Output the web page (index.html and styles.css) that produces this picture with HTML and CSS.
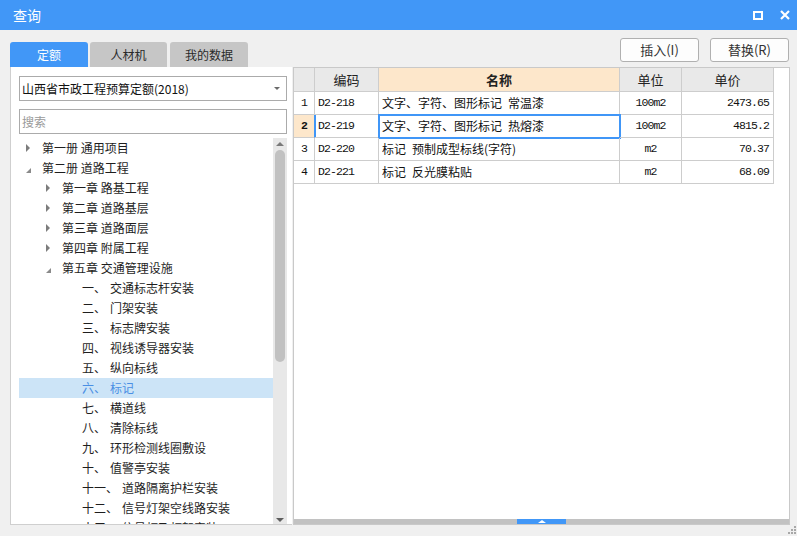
FILE: index.html
```html
<!DOCTYPE html>
<html lang="zh-CN">
<head>
<meta charset="utf-8">
<title>查询</title>
<link rel="stylesheet" href="styles.css">
</head>
<body>
<div class="window">
  <div class="titlebar">
    <span class="title">查询</span>
    <div class="win-btns">
      <svg class="ico" width="10" height="9" viewBox="0 0 10 9"><rect x="1" y="1" width="8" height="7" fill="none" stroke="#fff" stroke-width="2"/></svg>
      <svg class="ico" width="10" height="10" viewBox="0 0 10 10"><path d="M1 1L9 9M9 1L1 9" stroke="#fff" stroke-width="2.2" fill="none"/></svg>
    </div>
  </div>
  <div class="content">
    <div class="left">
      <div class="tabs">
        <div class="tab active">定额</div>
        <div class="tab t2">人材机</div>
        <div class="tab t3">我的数据</div>
      </div>
      <div class="panel">
        <div class="select"><span>山西省市政工程预算定额(2018)</span><span class="caret"></span></div>
        <div class="search">搜索</div>
        <div class="tree-wrap">
          <ul class="tree">
            <li class="l0"><span class="tw closed"></span>第一册 通用项目</li>
            <li class="l0"><span class="tw open"></span>第二册 道路工程</li>
            <li class="l1"><span class="tw closed"></span>第一章 路基工程</li>
            <li class="l1"><span class="tw closed"></span>第二章 道路基层</li>
            <li class="l1"><span class="tw closed"></span>第三章 道路面层</li>
            <li class="l1"><span class="tw closed"></span>第四章 附属工程</li>
            <li class="l1"><span class="tw open"></span>第五章 交通管理设施</li>
            <li class="l2"><span class="num">一、</span>交通标志杆安装</li>
            <li class="l2"><span class="num">二、</span>门架安装</li>
            <li class="l2"><span class="num">三、</span>标志牌安装</li>
            <li class="l2"><span class="num">四、</span>视线诱导器安装</li>
            <li class="l2"><span class="num">五、</span>纵向标线</li>
            <li class="l2 sel"><span class="num">六、</span>标记</li>
            <li class="l2"><span class="num">七、</span>横道线</li>
            <li class="l2"><span class="num">八、</span>清除标线</li>
            <li class="l2"><span class="num">九、</span>环形检测线圈敷设</li>
            <li class="l2"><span class="num">十、</span>值警亭安装</li>
            <li class="l2"><span class="num">十一、</span>道路隔离护栏安装</li>
            <li class="l2"><span class="num">十二、</span>信号灯架空线路安装</li>
            <li class="l2"><span class="num">十三、</span>信号灯及灯架安装</li>
          </ul>
          <div class="vscroll">
            <div class="sb-btn"><span class="up"></span></div>
            <div class="thumb"></div>
            <div class="sb-fill"></div>
            <div class="sb-btn"><span class="down"></span></div>
          </div>
        </div>
      </div>
    </div>
    <div class="right">
      <div class="toolbar">
        <button class="btn">插入(I)</button>
        <button class="btn">替换(R)</button>
      </div>
      <div class="grid-wrap">
        <div class="grid">
          <div class="hc"></div>
          <div class="hc">编码</div>
          <div class="hc name">名称</div>
          <div class="hc">单位</div>
          <div class="hc">单价</div>

          <div class="c rn mono">1</div>
          <div class="c code mono">D2-218</div>
          <div class="c txt">文字、字符、图形标记&ensp;常温漆</div>
          <div class="c unit mono">100m2</div>
          <div class="c price mono">2473.65</div>

          <div class="c rn mono cur">2</div>
          <div class="c code mono curcode">D2-219</div>
          <div class="c txt focus">文字、字符、图形标记&ensp;热熔漆</div>
          <div class="c unit mono">100m2</div>
          <div class="c price mono">4815.2</div>

          <div class="c rn mono">3</div>
          <div class="c code mono">D2-220</div>
          <div class="c txt">标记&ensp;预制成型标线(字符)</div>
          <div class="c unit mono">m2</div>
          <div class="c price mono">70.37</div>

          <div class="c rn mono">4</div>
          <div class="c code mono">D2-221</div>
          <div class="c txt">标记&ensp;反光膜粘贴</div>
          <div class="c unit mono">m2</div>
          <div class="c price mono">68.09</div>
        </div>
        <div class="grid-fill"></div>
        <div class="hscroll"><span class="hthumb"><span class="hup"></span></span></div>
      </div>
    </div>
  </div>
  <svg class="grip" width="8" height="8" viewBox="0 0 8 8">
    <rect x="6" y="0" width="2" height="2" fill="#a8a8a8"/>
    <rect x="3" y="3" width="2" height="2" fill="#a8a8a8"/>
    <rect x="6" y="3" width="2" height="2" fill="#a8a8a8"/>
    <rect x="0" y="6" width="2" height="2" fill="#a8a8a8"/>
    <rect x="3" y="6" width="2" height="2" fill="#a8a8a8"/>
    <rect x="6" y="6" width="2" height="2" fill="#a8a8a8"/>
  </svg>
</div>
</body>
</html>
```
FILE: styles.css
```css
* { box-sizing: border-box; margin: 0; padding: 0; }
html, body { width: 797px; height: 536px; overflow: hidden; }
body {
  font-family: "Noto Sans CJK SC", "Microsoft YaHei", sans-serif;
  font-size: 12px;
  color: #1a1a1a;
  background: #f0f0f0;
}
.window { position: relative; width: 797px; height: 536px; display: flex; flex-direction: column; }

.titlebar {
  flex: none; height: 30px; background: #4197f7; color: #fff;
  display: flex; align-items: center; justify-content: space-between;
  padding: 0 7px 0 13px;
}
.title { font-size: 14px; line-height: 30px; }
.win-btns { display: flex; align-items: center; gap: 17px; }
.ico { display: block; }

.content { flex: 1; display: flex; padding: 0 7px 11px 10px; min-height: 0; }

.left { width: 282px; display: flex; flex-direction: column; }
.tabs { flex: none; height: 25px; margin-top: 12px; display: flex; }
.tab {
  width: 78px; height: 25px; line-height: 25px; text-align: center;
  background: #c6c6c6; color: #2a2a2a; font-size: 12px;
  border-radius: 3px 3px 0 0;
}
.tab.active { background: #4197f7; color: #fff; }
.tab.t2 { width: 77px; margin-left: 2px; }
.tab.t3 { margin-left: 3px; }

.panel {
  flex: 1; min-height: 0; background: #fff;
  border-left: 1px solid #cfcfcf; border-bottom: 1px solid #cfcfcf;
  padding: 9px 5px 0 8px;
  display: flex; flex-direction: column;
}
.select, .search {
  flex: none; height: 25px; border: 1px solid #ababab; background: #fff;
  padding-left: 2px; line-height: 23px; font-size: 12px;
  display: flex; align-items: center; justify-content: space-between;
}
.select { color: #111; padding-right: 6px; }
.caret {
  width: 0; height: 0;
  border-left: 3px solid transparent; border-right: 3px solid transparent;
  border-top: 3px solid #6a6a6a;
}
.search { margin-top: 8px; color: #9a9a9a; }

.tree-wrap { flex: 1; min-height: 0; margin-top: 4px; display: flex; overflow: hidden; }
.tree { flex: 1; list-style: none; overflow: hidden; }
.tree li {
  height: 20px; line-height: 20px; display: flex; align-items: center;
  white-space: nowrap; color: #1e1e1e; font-size: 12px;
}
.tree li.l0 { padding-left: 7px; }
.tree li.l1 { padding-left: 27px; }
.tree li.l2 { padding-left: 63px; }
.tree li.sel { background: #cce4f7; color: #4a8fe4; }
.tw { flex: none; width: 16px; height: 20px; display: flex; align-items: center; }
.tw.closed::before {
  content: ""; width: 0; height: 0;
  border-left: 4px solid #7c7c7c;
  border-top: 4px solid transparent; border-bottom: 4px solid transparent;
}
.tw.open::before {
  content: ""; width: 0; height: 0; margin-top: 4px;
  border-bottom: 5px solid #8a8a8a; border-left: 5px solid transparent;
}
.num { margin-right: 4px; }

.vscroll { flex: none; width: 14px; background: #e8e8e8; display: flex; flex-direction: column; align-items: center; }
.sb-btn { flex: none; height: 12px; width: 14px; display: flex; align-items: center; justify-content: center; }
.up {
  width: 0; height: 0;
  border-left: 4px solid transparent; border-right: 4px solid transparent;
  border-bottom: 4px solid #7a7a7a;
}
.down {
  width: 0; height: 0; margin-top: 4px;
  border-left: 4px solid transparent; border-right: 4px solid transparent;
  border-top: 4px solid #5e5e5e;
}
.thumb { flex: none; width: 10px; height: 212px; background: #c1c1c1; border-radius: 5px; }
.sb-fill { flex: 1; }

.right { flex: 1; margin-left: 1px; display: flex; flex-direction: column; min-width: 0; }
.toolbar { flex: none; height: 37px; display: flex; justify-content: flex-end; gap: 11px; padding: 8px 1px 0 0; }
.btn {
  width: 79px; height: 24px; background: #fdfdfd; border: 1px solid #b0b0b0; border-radius: 3px;
  font-family: "Noto Sans CJK SC", "Microsoft YaHei", sans-serif; font-size: 13px; color: #333;
  line-height: 22px;
}
.grid-wrap { flex: 1; min-height: 0; background: #fff; border: 1px solid #c9c9c9; display: flex; flex-direction: column; }
.grid { display: grid; grid-template-columns: 21px 64px 241px 62px 92px; grid-auto-rows: 23px; grid-template-rows: 24px; width: 480px; }
.hc, .c { border-right: 1px solid #cdcdcd; border-bottom: 1px solid #cdcdcd; white-space: nowrap; overflow: visible; }
.hc { background: #e9e9e9; text-align: center; line-height: 23px; font-size: 13px; color: #222; }
.hc.name { background: #fde7cb; font-weight: bold; }
.c { line-height: 22px; font-size: 12px; color: #111; }
.mono { font-family: "Liberation Mono", "DejaVu Sans Mono", monospace; font-size: 11.5px; letter-spacing: -0.9px; }
.rn { text-align: center; }
.rn.cur { background: #fde7cb; font-weight: bold; border-right: 1px solid #4096f7; }
.code { padding-left: 3px; }
.curcode { box-shadow: inset 1px 0 0 #4096f7; }
.txt { padding-left: 3px; }
.focus { outline: 2px solid #4096f7; outline-offset: -1px; }
.unit { text-align: center; }
.price { text-align: right; padding-right: 4px; }
.grid-fill { flex: 1; }
.hscroll { flex: none; height: 5px; background: #c2c2c2; display: flex; }
.hthumb { margin-left: 223px; width: 49px; height: 5px; background: #4197f7; display: flex; align-items: center; justify-content: center; }
.hup {
  width: 0; height: 0;
  border-left: 4px solid transparent; border-right: 4px solid transparent;
  border-bottom: 3px solid #fff;
}
.grip { position: absolute; right: 1px; bottom: 2px; }
```
